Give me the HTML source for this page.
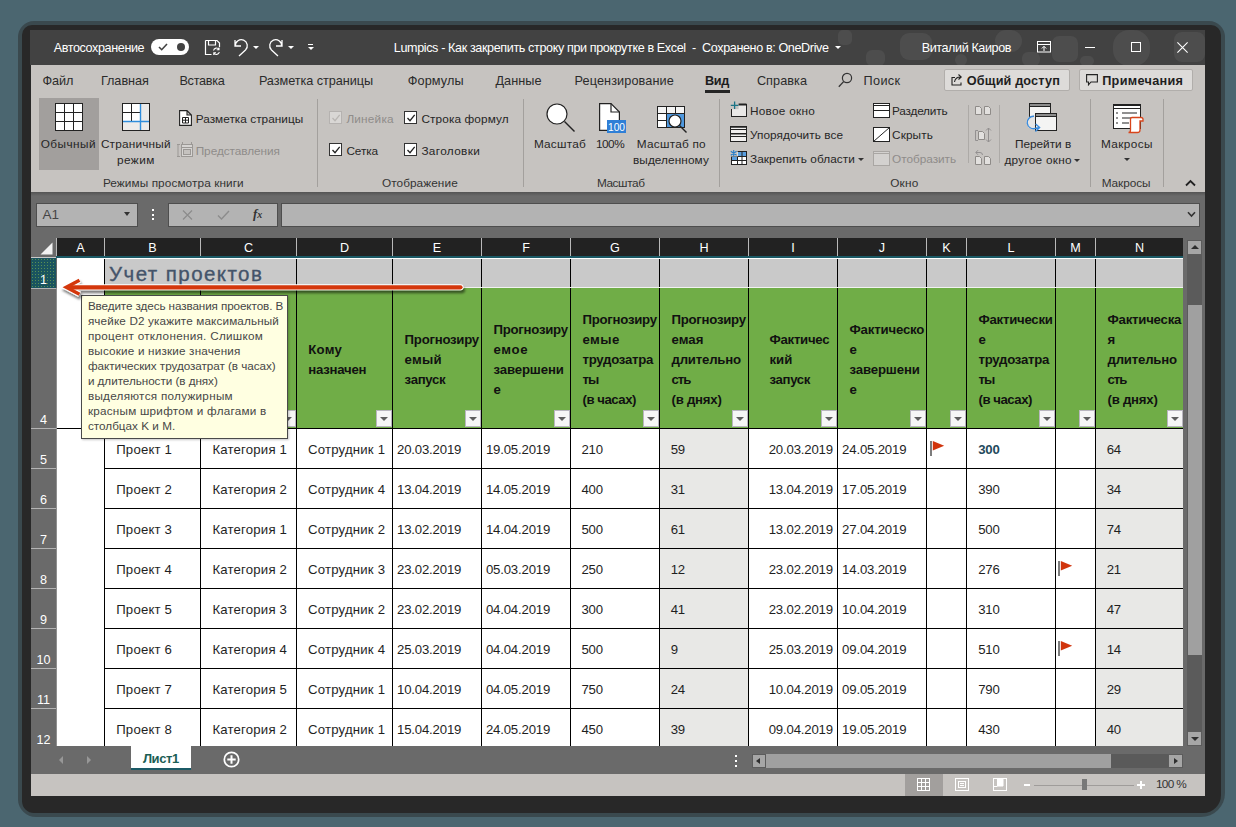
<!DOCTYPE html>
<html><head><meta charset="utf-8"><title>Excel</title>
<style>
html,body{margin:0;padding:0;}
body{width:1236px;height:827px;overflow:hidden;background:#4b6670;position:relative;font-family:"Liberation Sans",sans-serif;font-size:12px;color:#222;}
div,span,svg{position:absolute;box-sizing:border-box;}
.t{white-space:nowrap;}
.vl{width:1px;background:#000;}
.hl{height:1px;background:#000;}
.sep{width:1px;background:#a3a09d;top:99px;height:88px;}
.chk{width:12.6px;height:12.6px;border:1px solid #333;background:#fff;}
.fb{width:16.3px;height:16.5px;background:#f6f6f6;border:1px solid #b9b6bf;}
.fb:after{content:"";position:absolute;left:3.2px;top:5.8px;border-left:4.2px solid transparent;border-right:4.2px solid transparent;border-top:4.6px solid #5e5e5e;}
.da{border-left:3px solid transparent;border-right:3px solid transparent;border-top:3.5px solid #333;}
</style></head><body>

<div style="left:17.5px;top:21px;width:1207px;height:796px;background:rgba(38,38,38,.45);border-radius:16px 16px 24px 18px;"></div>
<div style="left:21.5px;top:25px;width:1199px;height:787.5px;background:#282828;border-radius:10px 10px 18px 12px;"></div>
<div style="left:31px;top:30px;width:1174px;height:766px;background:#6a6a6a;"></div>
<div style="left:30px;top:30px;width:1175px;height:34.5px;background:#424242;overflow:hidden;">
<div style="left:870px;top:3px;width:32px;height:27px;border-radius:9px;background:#4d4d4d;"></div>
<div style="left:808px;top:0px;width:14px;height:15px;border-radius:5px;background:#4d4d4d;"></div>
<div style="left:836px;top:20px;width:19px;height:16px;border-radius:6px;background:#4d4d4d;"></div>
<div style="left:965px;top:0px;width:27px;height:22px;border-radius:11px;background:#4d4d4d;"></div>
<div style="left:992px;top:22px;width:18px;height:14px;border-radius:6px;background:#4d4d4d;"></div>
<div style="left:1022px;top:6px;width:26px;height:26px;border-radius:7px;background:#4d4d4d;"></div>
<div style="left:1083px;top:0px;width:37px;height:36px;border-radius:16px;background:#4d4d4d;"></div>
<div style="left:1144px;top:2px;width:31px;height:30px;border-radius:8px;background:#4d4d4d;"></div>
<div style="left:925px;top:24px;width:12px;height:12px;border-radius:6px;background:#4d4d4d;"></div>
<div style="left:1050px;top:26px;width:14px;height:10px;border-radius:5px;background:#4d4d4d;"></div>
</div>
<div class="t" style="left:53.7px;top:39.5px;font-size:12.6px;line-height:16px;height:16px;color:#fff;letter-spacing:-0.39px;">Автосохранение</div>
<div style="left:151px;top:39px;width:38px;height:16px;border-radius:8px;background:#fff;"></div>
<div style="left:176.5px;top:43px;width:8px;height:8px;border-radius:4px;background:#424242;"></div>
<svg style="left:158px;top:43px" width="10" height="8" viewBox="0 0 10 8"><path d="M1 4 L3.7 6.7 L9 1" fill="none" stroke="#424242" stroke-width="1.6"/></svg>
<svg style="left:204px;top:39px" width="17" height="17" viewBox="0 0 17 17"><path d="M1.5 1.5 H13 L15.5 4 V8 M1.5 1.5 V15.5 H7.5 M4.5 1.5 V6 H11.5 V1.5" fill="none" stroke="#fff" stroke-width="1.2"/><path d="M9.5 11.5 A3 3 0 0 1 15 10.5 M15 8.5 V10.8 H12.7 M15.3 13 A3 3 0 0 1 9.8 14 M9.8 16 V13.7 H12" fill="none" stroke="#fff" stroke-width="1.1"/></svg>
<svg style="left:233px;top:38px" width="16" height="19" viewBox="0 0 16 19"><path d="M2 2 V8 H8 M2.3 7.7 A6 6 0 1 1 12.5 12 L6 18" fill="none" stroke="#fff" stroke-width="1.3"/></svg>
<div class="da" style="left:253px;top:46px;border-top-color:#fff;"></div>
<svg style="left:268px;top:38px" width="16" height="19" viewBox="0 0 16 19"><path d="M14 2 V8 H8 M13.7 7.7 A6 6 0 1 0 3.5 12 L10 18" fill="none" stroke="#fff" stroke-width="1.3"/></svg>
<div class="da" style="left:288px;top:46px;border-top-color:#fff;"></div>
<div style="left:308px;top:44px;width:5px;height:1.3px;background:#fff;"></div>
<div style="left:307.5px;top:47px;border-left:3px solid transparent;border-right:3px solid transparent;border-top:3.3px solid #fff;"></div>
<div class="t" style="left:393.8px;top:39.5px;font-size:12.6px;line-height:16px;height:16px;color:#fff;letter-spacing:-0.38px;">Lumpics - Как закрепить строку при прокрутке в Excel  -  Сохранено в: OneDrive</div>
<div class="da" style="left:835px;top:46px;border-top-color:#fff;"></div>
<div class="t" style="left:921.7px;top:39.5px;font-size:12.6px;line-height:16px;height:16px;color:#fff;letter-spacing:-0.41px;">Виталий Каиров</div>
<svg style="left:1037px;top:41px" width="14" height="12" viewBox="0 0 14 12"><rect x="0.5" y="0.5" width="13" height="10.5" fill="none" stroke="#fff"/><path d="M0.5 3.5 H13.5 M7 10 V5.5 M4.8 7.5 L7 5.3 L9.2 7.5" fill="none" stroke="#fff"/></svg>
<div style="left:1085px;top:47px;width:10px;height:1px;background:#fff;"></div>
<div style="left:1131px;top:42px;width:10px;height:10px;border:1px solid #fff;"></div>
<svg style="left:1176.5px;top:41.5px" width="11" height="11" viewBox="0 0 11 11"><path d="M0.4 0.4 L10.6 10.6 M10.6 0.4 L0.4 10.6" stroke="#fff" stroke-width="1.1"/></svg>
<div style="left:31px;top:64.5px;width:1174px;height:127.5px;background:#c6c3c0;"></div>
<div style="left:31px;top:192px;width:1174px;height:4px;background:linear-gradient(#545454,#6a6a6a);"></div>
<div class="t" style="left:42.4px;top:72.7px;font-size:12.7px;line-height:16px;height:16px;color:#2b2b2b;letter-spacing:-0.08px;">Файл</div>
<div class="t" style="left:100.9px;top:72.7px;font-size:12.7px;line-height:16px;height:16px;color:#2b2b2b;letter-spacing:-0.04px;">Главная</div>
<div class="t" style="left:179.4px;top:72.7px;font-size:12.7px;line-height:16px;height:16px;color:#2b2b2b;letter-spacing:-0.27px;">Вставка</div>
<div class="t" style="left:258.9px;top:72.7px;font-size:12.7px;line-height:16px;height:16px;color:#2b2b2b;letter-spacing:-0.06px;">Разметка страницы</div>
<div class="t" style="left:407.7px;top:72.7px;font-size:12.7px;line-height:16px;height:16px;color:#2b2b2b;letter-spacing:0.13px;">Формулы</div>
<div class="t" style="left:495.4px;top:72.7px;font-size:12.7px;line-height:16px;height:16px;color:#2b2b2b;letter-spacing:0.06px;">Данные</div>
<div class="t" style="left:574.6px;top:72.7px;font-size:12.7px;line-height:16px;height:16px;color:#2b2b2b;letter-spacing:0.09px;">Рецензирование</div>
<div class="t" style="left:756.9px;top:72.7px;font-size:12.7px;line-height:16px;height:16px;color:#2b2b2b;letter-spacing:0.05px;">Справка</div>
<div class="t" style="left:863.6px;top:72.7px;font-size:12.7px;line-height:16px;height:16px;color:#2b2b2b;letter-spacing:0.31px;">Поиск</div>
<div class="t" style="left:705.0px;top:72.7px;font-size:12.7px;line-height:16px;height:16px;color:#1d1d1d;letter-spacing:-0.34px;font-weight:bold;">Вид</div>
<div style="left:705px;top:90px;width:25px;height:3px;background:#252525;"></div>
<svg style="left:838px;top:72px" width="15" height="16" viewBox="0 0 15 16"><circle cx="9" cy="6" r="4.6" fill="none" stroke="#333" stroke-width="1.2"/><path d="M5.6 9.6 L0.8 14.8" stroke="#333" stroke-width="1.3"/></svg>
<div style="left:943.5px;top:69px;width:126px;height:22px;background:#dddbd9;border:1px solid #b1aeab;border-radius:2px;"></div>
<svg style="left:951px;top:73px" width="13" height="13" viewBox="0 0 13 13"><path d="M4 4.5 H1 V12 H10 V9.5" fill="none" stroke="#222" stroke-width="1.1"/><path d="M3.5 9 C4 6 6 4 9.5 4 M7.5 1.5 L10.2 4 L7.5 6.5" fill="none" stroke="#222" stroke-width="1.1"/></svg>
<div class="t" style="left:966.8px;top:72.6px;font-size:12.7px;line-height:16px;height:16px;color:#1f1f1f;letter-spacing:0.14px;font-weight:bold;">Общий доступ</div>
<div style="left:1079px;top:69px;width:113.5px;height:22px;background:#dddbd9;border:1px solid #b1aeab;border-radius:2px;"></div>
<svg style="left:1086px;top:74px" width="12" height="12" viewBox="0 0 12 12"><path d="M0.6 0.6 H11.4 V8 H5 L2.5 10.8 V8 H0.6 Z" fill="none" stroke="#222" stroke-width="1.1"/></svg>
<div class="t" style="left:1102.2px;top:72.6px;font-size:12.7px;line-height:16px;height:16px;color:#1f1f1f;letter-spacing:0.30px;font-weight:bold;">Примечания</div>
<div class="sep" style="left:317px;"></div>
<div class="sep" style="left:523px;"></div>
<div class="sep" style="left:719px;"></div>
<div class="sep" style="left:1090px;"></div>
<div class="sep" style="left:1163px;"></div>
<div class="sep" style="left:968px;top:105px;height:58px;background:#adaaa7;"></div>
<div class="sep" style="left:999px;top:105px;height:58px;background:#adaaa7;"></div>
<div class="t" style="left:102.9px;top:175.3px;font-size:11.8px;line-height:16px;height:16px;color:#333;letter-spacing:0.09px;">Режимы просмотра книги</div>
<div class="t" style="left:381.9px;top:175.3px;font-size:11.8px;line-height:16px;height:16px;color:#333;letter-spacing:0.08px;">Отображение</div>
<div class="t" style="left:596.9px;top:175.3px;font-size:11.8px;line-height:16px;height:16px;color:#333;letter-spacing:-0.40px;">Масштаб</div>
<div class="t" style="left:890.2px;top:175.3px;font-size:11.8px;line-height:16px;height:16px;color:#333;letter-spacing:0.22px;">Окно</div>
<div class="t" style="left:1101.7px;top:175.3px;font-size:11.8px;line-height:16px;height:16px;color:#333;letter-spacing:-0.06px;">Макросы</div>
<svg style="left:1185px;top:179px" width="11" height="8" viewBox="0 0 11 8"><path d="M1 6.5 L5.5 2 L10 6.5" fill="none" stroke="#222" stroke-width="1.8"/></svg>
<div style="left:39px;top:98px;width:60px;height:72px;background:#a29f9d;"></div>
<svg style="left:55px;top:103px" width="28" height="28" viewBox="0 0 28 28"><rect x="0.5" y="0.5" width="27" height="27" fill="#fff" stroke="#222"/><path d="M9.5 1 V27 M18.5 1 V27 M1 9.5 H27 M1 18.5 H27" stroke="#222"/></svg>
<div class="t" style="left:40.7px;top:136.0px;font-size:11.8px;line-height:16px;height:16px;color:#262626;letter-spacing:0.45px;">Обычный</div>
<svg style="left:122px;top:103px" width="28" height="28" viewBox="0 0 28 28"><rect x="0.5" y="0.5" width="27" height="27" fill="#ecebea" stroke="#222"/><rect x="1" y="1" width="17" height="17" fill="#fff"/><path d="M9.5 1 V18 M1 9.5 H18" stroke="#222"/><path d="M18.5 1 V27 M1 18.5 H27" stroke="#2f8ddc" stroke-width="1.4"/></svg>
<div class="t" style="left:100.9px;top:136.0px;font-size:11.8px;line-height:16px;height:16px;color:#262626;letter-spacing:0.20px;">Страничный</div>
<div class="t" style="left:116.9px;top:152.3px;font-size:11.8px;line-height:16px;height:16px;color:#262626;letter-spacing:0.46px;">режим</div>
<svg style="left:179px;top:110px" width="13" height="16" viewBox="0 0 13 16"><path d="M0.6 0.6 H8 L12.4 5 V15.4 H0.6 Z M8 0.6 V5 H12.4" fill="#fff" stroke="#222" stroke-width="1.1"/><path d="M3.5 7.5 H9.5 V13 H3.5 Z M6.5 7.5 V13 M3.5 10.2 H9.5" fill="none" stroke="#222"/></svg>
<div class="t" style="left:195.7px;top:111.3px;font-size:11.8px;line-height:16px;height:16px;color:#262626;letter-spacing:0.03px;">Разметка страницы</div>
<svg style="left:177px;top:142px" width="16" height="16" viewBox="0 0 16 16"><path d="M1 2 V15 M0 2.5 H3 M0 14.5 H3 M5.5 0 V2 M14.5 0 V2" stroke="#9b9895"/><rect x="4.5" y="2.5" width="11" height="12" fill="#d6d4d2" stroke="#9b9895"/><rect x="6.5" y="7.5" width="7" height="5" fill="#c5c2bf" stroke="#9b9895"/><path d="M5 5.5 H15" stroke="#9b9895"/></svg>
<div class="t" style="left:195.7px;top:143.2px;font-size:11.8px;line-height:16px;height:16px;color:#8f8c8a;letter-spacing:-0.05px;">Представления</div>
<div class="chk" style="left:329.2px;top:111.2px;border-color:#b5b2b0;background:#d9d7d5;"></div>
<svg style="left:329.5px;top:111.5px" width="12" height="12" viewBox="0 0 12 12"><path d="M2.5 6 L5 8.7 L9.7 2.8" fill="none" stroke="#b9b6b3" stroke-width="1.3"/></svg>
<div class="t" style="left:346.4px;top:111.3px;font-size:11.8px;line-height:16px;height:16px;color:#8f8c8a;letter-spacing:0.20px;">Линейка</div>
<div class="chk" style="left:329.2px;top:143.2px;"></div>
<svg style="left:329.5px;top:143.5px" width="12" height="12" viewBox="0 0 12 12"><path d="M2.5 6 L5 8.7 L9.7 2.8" fill="none" stroke="#222" stroke-width="1.3"/></svg>
<div class="t" style="left:346.4px;top:143.2px;font-size:11.8px;line-height:16px;height:16px;color:#262626;letter-spacing:-0.10px;">Сетка</div>
<div class="chk" style="left:404.2px;top:111.2px;"></div>
<svg style="left:404.5px;top:111.5px" width="12" height="12" viewBox="0 0 12 12"><path d="M2.5 6 L5 8.7 L9.7 2.8" fill="none" stroke="#222" stroke-width="1.3"/></svg>
<div class="t" style="left:421.4px;top:111.3px;font-size:11.8px;line-height:16px;height:16px;color:#262626;letter-spacing:0.12px;">Строка формул</div>
<div class="chk" style="left:404.2px;top:143.2px;"></div>
<svg style="left:404.5px;top:143.5px" width="12" height="12" viewBox="0 0 12 12"><path d="M2.5 6 L5 8.7 L9.7 2.8" fill="none" stroke="#222" stroke-width="1.3"/></svg>
<div class="t" style="left:421.4px;top:143.2px;font-size:11.8px;line-height:16px;height:16px;color:#262626;letter-spacing:0.34px;">Заголовки</div>
<svg style="left:546px;top:103px" width="30" height="30" viewBox="0 0 30 30"><circle cx="11" cy="11" r="10" fill="#fff" stroke="#222" stroke-width="1.2"/><path d="M18.5 18.5 L28.5 28.5" stroke="#222" stroke-width="1.4"/></svg>
<div class="t" style="left:533.9px;top:136.0px;font-size:11.8px;line-height:16px;height:16px;color:#262626;letter-spacing:0.23px;">Масштаб</div>
<svg style="left:599px;top:103px" width="27" height="31" viewBox="0 0 27 31"><path d="M0.6 0.6 H12 L20.4 9 V27.4 H0.6 Z" fill="#fff" stroke="#222" stroke-width="1.2"/><path d="M12 0.6 V9 H20.4" fill="none" stroke="#222" stroke-width="1.2"/><rect x="8" y="17" width="19" height="13" fill="#2f7fd6"/><text x="17.5" y="28" font-family="Liberation Sans" font-size="11" fill="#fff" text-anchor="middle" textLength="17" lengthAdjust="spacingAndGlyphs">100</text></svg>
<div class="t" style="left:595.9px;top:136.0px;font-size:11.8px;line-height:16px;height:16px;color:#262626;letter-spacing:-0.45px;">100%</div>
<svg style="left:657px;top:106px" width="31" height="28" viewBox="0 0 31 28"><rect x="0.5" y="0.5" width="27" height="21" fill="#fff" stroke="#222"/><rect x="1" y="1" width="26" height="6" fill="#f4f4f4"/><path d="M0.5 7.5 H27.5 M0.5 14.5 H27.5 M9.5 0.5 V21.5 M18.5 0.5 V21.5" stroke="#222"/><rect x="10" y="8" width="17" height="13" fill="#4f98de"/><circle cx="18" cy="15" r="6" fill="#fff" stroke="#222" stroke-width="1.2"/><path d="M22.5 19.5 L29.5 26.5" stroke="#222" stroke-width="1.4"/></svg>
<div class="t" style="left:636.8px;top:136.0px;font-size:11.8px;line-height:16px;height:16px;color:#262626;letter-spacing:0.24px;">Масштаб по</div>
<div class="t" style="left:633.0px;top:152.3px;font-size:11.8px;line-height:16px;height:16px;color:#262626;letter-spacing:0.08px;">выделенному</div>
<svg style="left:730px;top:101px" width="17" height="17" viewBox="0 0 17 17"><rect x="1.5" y="3.5" width="15" height="12" fill="#e9e8e7" stroke="#222"/><path d="M1.5 3.5 H16.5" stroke="#222" stroke-width="2"/><rect x="0" y="0" width="8.6" height="8.2" fill="#c6c3c0"/><path d="M1.5 8 V15.5" stroke="#222"/><path d="M4.6 0.6 V8 M0.8 4.3 H8.4" stroke="#1b7486" stroke-width="1.3"/></svg>
<div class="t" style="left:750.0px;top:103.2px;font-size:11.8px;line-height:16px;height:16px;color:#262626;letter-spacing:0.27px;">Новое окно</div>
<svg style="left:730px;top:126px" width="17" height="16" viewBox="0 0 17 16"><rect x="0.5" y="0.5" width="16" height="15" fill="#f1f0ef" stroke="#222"/><path d="M0.5 1 H16.5 M0.5 7.8 H16.5" stroke="#222" stroke-width="1.6"/><path d="M0.5 3.5 H16.5 M0.5 10.5 H16.5" stroke="#222"/></svg>
<div class="t" style="left:750.0px;top:127.2px;font-size:11.8px;line-height:16px;height:16px;color:#262626;letter-spacing:0.07px;">Упорядочить все</div>
<svg style="left:730px;top:150px" width="17" height="16" viewBox="0 0 17 16"><rect x="1.5" y="1.5" width="15" height="13" fill="#fff" stroke="#222"/><rect x="8" y="2" width="8" height="4" fill="#5a9fe0"/><rect x="2" y="7" width="5" height="4" fill="#5a9fe0"/><path d="M7.5 6.5 V14.5 M12 1.5 V14.5 M1.5 6.5 H16.5 M1.5 10.5 H16.5" stroke="#222"/><rect x="0" y="0" width="7.6" height="6.6" fill="#c6c3c0"/><path d="M3.7 0 V6.4 M0.8 1.2 L6.6 5.2 M6.6 1.2 L0.8 5.2" stroke="#2a7fc9" stroke-width="1.1"/></svg>
<div class="t" style="left:750.0px;top:151.2px;font-size:11.8px;line-height:16px;height:16px;color:#262626;letter-spacing:0.06px;">Закрепить области</div>
<div class="da" style="left:858px;top:158px;"></div>
<svg style="left:873px;top:103px" width="17" height="15" viewBox="0 0 17 15"><rect x="0.5" y="0.5" width="16" height="14" fill="#fff" stroke="#222"/><path d="M0.5 2.5 H16.5 M0.5 7.5 H16.5" stroke="#222"/></svg>
<div class="t" style="left:892.0px;top:103.2px;font-size:11.8px;line-height:16px;height:16px;color:#262626;letter-spacing:-0.20px;">Разделить</div>
<svg style="left:873px;top:127px" width="17" height="15" viewBox="0 0 17 15"><rect x="0.5" y="0.5" width="16" height="14" fill="#fff" stroke="#222"/><path d="M0.5 14.5 L16.5 0.5" stroke="#222"/></svg>
<div class="t" style="left:892.0px;top:127.2px;font-size:11.8px;line-height:16px;height:16px;color:#262626;letter-spacing:0.12px;">Скрыть</div>
<svg style="left:873px;top:151px" width="17" height="15" viewBox="0 0 17 15"><rect x="0.5" y="0.5" width="16" height="14" fill="#d3d1cf" stroke="#a9a6a3"/><path d="M0.5 2.5 H16.5" stroke="#a9a6a3"/></svg>
<div class="t" style="left:892.0px;top:151.2px;font-size:11.8px;line-height:16px;height:16px;color:#8f8c8a;letter-spacing:-0.02px;">Отобразить</div>
<svg style="left:975px;top:105px" width="17" height="12" viewBox="0 0 17 12"><path d="M0.5 1.5 h4 l2 2 v6 h-6 z" fill="#e2e0de" stroke="#8e8b88" stroke-width="1"/><path d="M9.5 1.5 h4 l2 2 v6 h-6 z" fill="#e2e0de" stroke="#8e8b88" stroke-width="1"/></svg>
<svg style="left:975px;top:126px" width="17" height="18" viewBox="0 0 17 18"><path d="M3 4.5 H0.5 V14.5 H3" fill="none" stroke="#939090"/><path d="M3.5 5.5 h4 l2 2 v6 h-6 z" fill="#e2e0de" stroke="#8e8b88" stroke-width="1"/><path d="M13.5 2 V16 M11 4.5 L13.5 2 L16 4.5 M11 13.5 L13.5 16 L16 13.5" fill="none" stroke="#939090"/></svg>
<svg style="left:975px;top:149px" width="17" height="17" viewBox="0 0 17 17"><path d="M1 3.5 H5 Q7.5 3.5 7.5 6 M3 1.2 L0.8 3.5 L3 5.8" fill="none" stroke="#939090"/><path d="M0.5 7.5 h4 l2 2 v6 h-6 z" fill="#e2e0de" stroke="#8e8b88" stroke-width="1"/><path d="M9.5 7.5 h4 l2 2 v6 h-6 z" fill="#e2e0de" stroke="#8e8b88" stroke-width="1"/></svg>
<svg style="left:1026px;top:103px" width="32" height="31" viewBox="0 0 32 31"><rect x="3.5" y="0.5" width="21" height="17" fill="#f4f4f3" stroke="#222"/><rect x="3.5" y="0.5" width="21" height="3" fill="#8c8c8c" stroke="#222"/><circle cx="7.5" cy="19.5" r="7" fill="#e6e5e4"/><rect x="9.5" y="10.5" width="21" height="17" fill="#f4f4f3" stroke="#222"/><rect x="9.5" y="10.5" width="21" height="3" fill="#8c8c8c" stroke="#222"/><path d="M8 13.3 A6.2 6.2 0 1 0 9.5 25.3 L13 24.7 M9.6 21 L13.6 24.6 L9.4 28.6" fill="none" stroke="#3a8bdc" stroke-width="1.4"/></svg>
<div class="t" style="left:1014.9px;top:136.0px;font-size:11.8px;line-height:16px;height:16px;color:#262626;letter-spacing:0.01px;">Перейти в</div>
<div class="t" style="left:1004.4px;top:152.3px;font-size:11.8px;line-height:16px;height:16px;color:#262626;letter-spacing:0.27px;">другое окно</div>
<div class="da" style="left:1074px;top:159px;"></div>
<svg style="left:1113px;top:104px" width="31" height="30" viewBox="0 0 31 30"><rect x="0.5" y="0.5" width="27" height="24" fill="#fff" stroke="#222"/><path d="M0.5 1 H27.5" stroke="#222" stroke-width="2"/><path d="M0.5 4.5 H27.5" stroke="#222"/><path d="M3 9 h3 M3 14 h3 M3 19 h3" stroke="#222" stroke-dasharray="2 1"/><path d="M9 9 H24 M9 14 H18 M9 19 H16" stroke="#222" stroke-width="1.2"/><path d="M19 13.5 H28 Q30 13.5 30 15.5 V17 H27 V26 Q27 28.5 24.5 28.5 H15.5 Q17.5 28.5 17.5 26 V15 Q17.5 13.5 19 13.5 Z" fill="#fff" stroke="#d8451b" stroke-width="1.3"/></svg>
<div class="t" style="left:1101.0px;top:136.0px;font-size:11.8px;line-height:16px;height:16px;color:#262626;letter-spacing:0.37px;">Макросы</div>
<div class="da" style="left:1124px;top:158px;"></div>
<div style="left:36px;top:202.5px;width:102px;height:24.7px;background:#b3b3b3;border:1px solid #4e4e4e;"></div>
<div class="t" style="left:42.4px;top:207.0px;font-size:13.5px;line-height:16px;height:16px;color:#454545;letter-spacing:0.09px;">A1</div>
<div style="left:124px;top:212px;border-left:3.5px solid transparent;border-right:3.5px solid transparent;border-top:4px solid #333;"></div>
<div style="left:152px;top:209.0px;width:2px;height:2px;background:#fff;"></div>
<div style="left:152px;top:213.5px;width:2px;height:2px;background:#fff;"></div>
<div style="left:152px;top:218.0px;width:2px;height:2px;background:#fff;"></div>
<div style="left:168px;top:202.5px;width:110px;height:24.7px;background:#b3b3b3;border:1px solid #4e4e4e;"></div>
<svg style="left:182px;top:210px" width="11" height="10" viewBox="0 0 11 10"><path d="M1 0.5 L10 9.5 M10 0.5 L1 9.5" stroke="#8c8c8c" stroke-width="1.2"/></svg>
<svg style="left:217px;top:210px" width="13" height="10" viewBox="0 0 13 10"><path d="M1 5.5 L4.5 9 L12 1" fill="none" stroke="#8c8c8c" stroke-width="1.4"/></svg>
<div class="t" style="left:253px;top:206px;line-height:16px;font-family:'Liberation Serif',serif;font-style:italic;font-weight:bold;font-size:13px;color:#333;">f<span style="position:static;font-size:10px;">x</span></div>
<div style="left:281px;top:202.5px;width:919px;height:24.7px;background:#b3b3b3;border:1px solid #4e4e4e;"></div>
<svg style="left:1187px;top:211px" width="9" height="7" viewBox="0 0 9 7"><path d="M1 1.2 L4.5 5 L8 1.2" fill="none" stroke="#333" stroke-width="1.6"/></svg>
<div style="left:57px;top:238px;width:1126px;height:18px;background:#222222;"></div>
<svg style="left:40px;top:241.5px" width="13" height="13" viewBox="0 0 13 13"><path d="M12.5 0.5 V12.5 H0.5 Z" fill="#f2f2f2"/></svg>
<div class="t" style="left:57px;top:238px;width:47px;height:18px;line-height:21px;color:#fff;font-size:12.6px;text-align:center;">A</div>
<div style="left:56px;top:238px;width:1px;height:18px;background:#b9b9b9;"></div>
<div class="t" style="left:105px;top:238px;width:95px;height:18px;line-height:21px;color:#fff;font-size:12.6px;text-align:center;">B</div>
<div style="left:104px;top:238px;width:1px;height:18px;background:#b9b9b9;"></div>
<div class="t" style="left:201px;top:238px;width:95px;height:18px;line-height:21px;color:#fff;font-size:12.6px;text-align:center;">C</div>
<div style="left:200px;top:238px;width:1px;height:18px;background:#b9b9b9;"></div>
<div class="t" style="left:297px;top:238px;width:95px;height:18px;line-height:21px;color:#fff;font-size:12.6px;text-align:center;">D</div>
<div style="left:296px;top:238px;width:1px;height:18px;background:#b9b9b9;"></div>
<div class="t" style="left:393px;top:238px;width:88px;height:18px;line-height:21px;color:#fff;font-size:12.6px;text-align:center;">E</div>
<div style="left:392px;top:238px;width:1px;height:18px;background:#b9b9b9;"></div>
<div class="t" style="left:482px;top:238px;width:88px;height:18px;line-height:21px;color:#fff;font-size:12.6px;text-align:center;">F</div>
<div style="left:481px;top:238px;width:1px;height:18px;background:#b9b9b9;"></div>
<div class="t" style="left:571px;top:238px;width:88px;height:18px;line-height:21px;color:#fff;font-size:12.6px;text-align:center;">G</div>
<div style="left:570px;top:238px;width:1px;height:18px;background:#b9b9b9;"></div>
<div class="t" style="left:660px;top:238px;width:88px;height:18px;line-height:21px;color:#fff;font-size:12.6px;text-align:center;">H</div>
<div style="left:659px;top:238px;width:1px;height:18px;background:#b9b9b9;"></div>
<div class="t" style="left:749px;top:238px;width:88px;height:18px;line-height:21px;color:#fff;font-size:12.6px;text-align:center;">I</div>
<div style="left:748px;top:238px;width:1px;height:18px;background:#b9b9b9;"></div>
<div class="t" style="left:838px;top:238px;width:88px;height:18px;line-height:21px;color:#fff;font-size:12.6px;text-align:center;">J</div>
<div style="left:837px;top:238px;width:1px;height:18px;background:#b9b9b9;"></div>
<div class="t" style="left:927px;top:238px;width:39px;height:18px;line-height:21px;color:#fff;font-size:12.6px;text-align:center;">K</div>
<div style="left:926px;top:238px;width:1px;height:18px;background:#b9b9b9;"></div>
<div class="t" style="left:967px;top:238px;width:88px;height:18px;line-height:21px;color:#fff;font-size:12.6px;text-align:center;">L</div>
<div style="left:966px;top:238px;width:1px;height:18px;background:#b9b9b9;"></div>
<div class="t" style="left:1056px;top:238px;width:39px;height:18px;line-height:21px;color:#fff;font-size:12.6px;text-align:center;">M</div>
<div style="left:1055px;top:238px;width:1px;height:18px;background:#b9b9b9;"></div>
<div class="t" style="left:1096px;top:238px;width:87px;height:18px;line-height:21px;color:#fff;font-size:12.6px;text-align:center;">N</div>
<div style="left:1095px;top:238px;width:1px;height:18px;background:#b9b9b9;"></div>
<div style="left:31px;top:257px;width:25px;height:1px;background:#c9c9c9;"></div>
<div style="left:56px;top:288px;width:1px;height:458px;background:#8f8f8f;"></div>
<div style="left:56px;top:256px;width:1127px;height:2px;background:#1b5a66;"></div>
<div style="left:57px;top:258px;width:1126px;height:488px;background:#fff;"></div>
<div style="left:105px;top:259px;width:1078px;height:28px;background:#c9c9c9;"></div>
<div style="left:105px;top:288px;width:1078px;height:140px;background:#70ad47;"></div>
<div style="left:660px;top:429px;width:88px;height:317px;background:#e8e8e6;"></div>
<div style="left:1096px;top:429px;width:87px;height:317px;background:#e8e8e6;"></div>
<div style="left:31px;top:258px;width:25px;height:30px;background:#1b5560;background-image:radial-gradient(circle,#8cc04a 0.6px,transparent 1px);background-size:3px 3px;"></div>
<div style="left:31px;top:258px;width:25px;height:30px;background:rgba(27,85,96,.45);"></div>
<div style="left:31px;top:287.6px;width:25px;height:1.4px;background:#b3b3b3;"></div>
<div class="t" style="left:31px;width:25px;top:273.4px;color:#fff;font-size:12.6px;text-align:center;line-height:14px;height:14px;">1</div>
<div style="left:31px;top:427.6px;width:25px;height:1.4px;background:#b3b3b3;"></div>
<div class="t" style="left:31px;width:25px;top:413.4px;color:#fff;font-size:12.6px;text-align:center;line-height:14px;height:14px;">4</div>
<div style="left:31px;top:467.6px;width:25px;height:1.4px;background:#b3b3b3;"></div>
<div class="t" style="left:31px;width:25px;top:453.4px;color:#fff;font-size:12.6px;text-align:center;line-height:14px;height:14px;">5</div>
<div style="left:31px;top:507.6px;width:25px;height:1.4px;background:#b3b3b3;"></div>
<div class="t" style="left:31px;width:25px;top:493.4px;color:#fff;font-size:12.6px;text-align:center;line-height:14px;height:14px;">6</div>
<div style="left:31px;top:547.6px;width:25px;height:1.4px;background:#b3b3b3;"></div>
<div class="t" style="left:31px;width:25px;top:533.4px;color:#fff;font-size:12.6px;text-align:center;line-height:14px;height:14px;">7</div>
<div style="left:31px;top:587.6px;width:25px;height:1.4px;background:#b3b3b3;"></div>
<div class="t" style="left:31px;width:25px;top:573.4px;color:#fff;font-size:12.6px;text-align:center;line-height:14px;height:14px;">8</div>
<div style="left:31px;top:627.6px;width:25px;height:1.4px;background:#b3b3b3;"></div>
<div class="t" style="left:31px;width:25px;top:613.4px;color:#fff;font-size:12.6px;text-align:center;line-height:14px;height:14px;">9</div>
<div style="left:31px;top:667.6px;width:25px;height:1.4px;background:#b3b3b3;"></div>
<div class="t" style="left:31px;width:25px;top:653.4px;color:#fff;font-size:12.6px;text-align:center;line-height:14px;height:14px;">10</div>
<div style="left:31px;top:707.6px;width:25px;height:1.4px;background:#b3b3b3;"></div>
<div class="t" style="left:31px;width:25px;top:693.4px;color:#fff;font-size:12.6px;text-align:center;line-height:14px;height:14px;">11</div>
<div class="t" style="left:31px;width:25px;top:732.5px;color:#fff;font-size:12.6px;text-align:center;line-height:14px;height:14px;">12</div>
<div class="vl" style="left:104px;top:259px;height:28px;"></div>
<div class="vl" style="left:104px;top:288px;height:458px;"></div>
<div class="vl" style="left:200px;top:288px;height:458px;"></div>
<div class="vl" style="left:296px;top:259px;height:28px;"></div>
<div class="vl" style="left:296px;top:288px;height:458px;"></div>
<div class="vl" style="left:392px;top:259px;height:28px;"></div>
<div class="vl" style="left:392px;top:288px;height:458px;"></div>
<div class="vl" style="left:481px;top:259px;height:28px;"></div>
<div class="vl" style="left:481px;top:288px;height:458px;"></div>
<div class="vl" style="left:570px;top:259px;height:28px;"></div>
<div class="vl" style="left:570px;top:288px;height:458px;"></div>
<div class="vl" style="left:659px;top:259px;height:28px;"></div>
<div class="vl" style="left:659px;top:288px;height:458px;"></div>
<div class="vl" style="left:748px;top:259px;height:28px;"></div>
<div class="vl" style="left:748px;top:288px;height:458px;"></div>
<div class="vl" style="left:837px;top:259px;height:28px;"></div>
<div class="vl" style="left:837px;top:288px;height:458px;"></div>
<div class="vl" style="left:926px;top:259px;height:28px;"></div>
<div class="vl" style="left:926px;top:288px;height:458px;"></div>
<div class="vl" style="left:966px;top:259px;height:28px;"></div>
<div class="vl" style="left:966px;top:288px;height:458px;"></div>
<div class="vl" style="left:1055px;top:259px;height:28px;"></div>
<div class="vl" style="left:1055px;top:288px;height:458px;"></div>
<div class="vl" style="left:1095px;top:259px;height:28px;"></div>
<div class="vl" style="left:1095px;top:288px;height:458px;"></div>
<div class="hl" style="left:57px;top:428px;width:1126px;"></div>
<div class="hl" style="left:105px;top:468px;width:1078px;"></div>
<div class="hl" style="left:105px;top:508px;width:1078px;"></div>
<div class="hl" style="left:105px;top:548px;width:1078px;"></div>
<div class="hl" style="left:105px;top:588px;width:1078px;"></div>
<div class="hl" style="left:105px;top:628px;width:1078px;"></div>
<div class="hl" style="left:105px;top:668px;width:1078px;"></div>
<div class="hl" style="left:105px;top:708px;width:1078px;"></div>
<div style="left:105px;top:287px;width:1078px;height:1px;background:#f1f1f1;"></div>
<div class="t" style="left:109.1px;top:261.8px;font-size:20.5px;line-height:24px;height:24px;color:#44546a;letter-spacing:1.44px;-webkit-text-stroke:0.35px #44546a;">Учет проектов</div>
<div class="t" style="left:308.2px;top:340.0px;font-size:13.2px;line-height:20px;height:20px;color:#111;letter-spacing:0.26px;font-weight:bold;">Кому</div>
<div class="t" style="left:308.2px;top:360.0px;font-size:13.2px;line-height:20px;height:20px;color:#111;letter-spacing:-0.23px;font-weight:bold;">назначен</div>
<div class="t" style="left:404.6px;top:330.0px;font-size:13.2px;line-height:20px;height:20px;color:#111;letter-spacing:-0.25px;font-weight:bold;">Прогнозиру</div>
<div class="t" style="left:404.6px;top:350.0px;font-size:13.2px;line-height:20px;height:20px;color:#111;letter-spacing:0.25px;font-weight:bold;">емый</div>
<div class="t" style="left:404.6px;top:370.0px;font-size:13.2px;line-height:20px;height:20px;color:#111;letter-spacing:-0.34px;font-weight:bold;">запуск</div>
<div class="t" style="left:493.5px;top:320.0px;font-size:13.2px;line-height:20px;height:20px;color:#111;letter-spacing:-0.25px;font-weight:bold;">Прогнозиру</div>
<div class="t" style="left:493.5px;top:340.0px;font-size:13.2px;line-height:20px;height:20px;color:#111;letter-spacing:0.69px;font-weight:bold;">емое</div>
<div class="t" style="left:493.5px;top:360.0px;font-size:13.2px;line-height:20px;height:20px;color:#111;letter-spacing:-0.14px;font-weight:bold;">завершени</div>
<div class="t" style="left:493.5px;top:380.0px;font-size:13.2px;line-height:20px;height:20px;color:#111;letter-spacing:-0.22px;font-weight:bold;">е</div>
<div class="t" style="left:582.5px;top:310.0px;font-size:13.2px;line-height:20px;height:20px;color:#111;letter-spacing:-0.25px;font-weight:bold;">Прогнозиру</div>
<div class="t" style="left:582.5px;top:330.0px;font-size:13.2px;line-height:20px;height:20px;color:#111;letter-spacing:0.45px;font-weight:bold;">емые</div>
<div class="t" style="left:582.5px;top:350.0px;font-size:13.2px;line-height:20px;height:20px;color:#111;letter-spacing:-0.26px;font-weight:bold;">трудозатра</div>
<div class="t" style="left:582.5px;top:370.0px;font-size:13.2px;line-height:20px;height:20px;color:#111;letter-spacing:-1.02px;font-weight:bold;">ты</div>
<div class="t" style="left:582.5px;top:390.0px;font-size:13.2px;line-height:20px;height:20px;color:#111;letter-spacing:-0.47px;font-weight:bold;">(в часах)</div>
<div class="t" style="left:671.5px;top:310.0px;font-size:13.2px;line-height:20px;height:20px;color:#111;letter-spacing:-0.25px;font-weight:bold;">Прогнозиру</div>
<div class="t" style="left:671.5px;top:330.0px;font-size:13.2px;line-height:20px;height:20px;color:#111;letter-spacing:0.03px;font-weight:bold;">емая</div>
<div class="t" style="left:671.5px;top:350.0px;font-size:13.2px;line-height:20px;height:20px;color:#111;letter-spacing:-0.20px;font-weight:bold;">длительно</div>
<div class="t" style="left:671.5px;top:370.0px;font-size:13.2px;line-height:20px;height:20px;color:#111;letter-spacing:-1.07px;font-weight:bold;">сть</div>
<div class="t" style="left:671.5px;top:390.0px;font-size:13.2px;line-height:20px;height:20px;color:#111;letter-spacing:-0.23px;font-weight:bold;">(в днях)</div>
<div class="t" style="left:769.5px;top:330.0px;font-size:13.2px;line-height:20px;height:20px;color:#111;letter-spacing:-0.27px;font-weight:bold;">Фактичес</div>
<div class="t" style="left:769.5px;top:350.0px;font-size:13.2px;line-height:20px;height:20px;color:#111;letter-spacing:-0.04px;font-weight:bold;">кий</div>
<div class="t" style="left:769.5px;top:370.0px;font-size:13.2px;line-height:20px;height:20px;color:#111;letter-spacing:-0.34px;font-weight:bold;">запуск</div>
<div class="t" style="left:849.5px;top:320.0px;font-size:13.2px;line-height:20px;height:20px;color:#111;letter-spacing:-0.17px;font-weight:bold;">Фактическо</div>
<div class="t" style="left:849.5px;top:340.0px;font-size:13.2px;line-height:20px;height:20px;color:#111;letter-spacing:-0.22px;font-weight:bold;">е</div>
<div class="t" style="left:849.5px;top:360.0px;font-size:13.2px;line-height:20px;height:20px;color:#111;letter-spacing:-0.14px;font-weight:bold;">завершени</div>
<div class="t" style="left:849.5px;top:380.0px;font-size:13.2px;line-height:20px;height:20px;color:#111;letter-spacing:-0.22px;font-weight:bold;">е</div>
<div class="t" style="left:978.5px;top:310.0px;font-size:13.2px;line-height:20px;height:20px;color:#111;letter-spacing:-0.25px;font-weight:bold;">Фактически</div>
<div class="t" style="left:978.5px;top:330.0px;font-size:13.2px;line-height:20px;height:20px;color:#111;letter-spacing:-0.22px;font-weight:bold;">е</div>
<div class="t" style="left:978.5px;top:350.0px;font-size:13.2px;line-height:20px;height:20px;color:#111;letter-spacing:-0.26px;font-weight:bold;">трудозатра</div>
<div class="t" style="left:978.5px;top:370.0px;font-size:13.2px;line-height:20px;height:20px;color:#111;letter-spacing:-1.02px;font-weight:bold;">ты</div>
<div class="t" style="left:978.5px;top:390.0px;font-size:13.2px;line-height:20px;height:20px;color:#111;letter-spacing:-0.47px;font-weight:bold;">(в часах)</div>
<div class="t" style="left:1107.5px;top:310.0px;font-size:13.2px;line-height:20px;height:20px;color:#111;letter-spacing:-0.22px;font-weight:bold;">Фактическа</div>
<div class="t" style="left:1107.5px;top:330.0px;font-size:13.2px;line-height:20px;height:20px;color:#111;letter-spacing:-0.22px;font-weight:bold;">я</div>
<div class="t" style="left:1107.5px;top:350.0px;font-size:13.2px;line-height:20px;height:20px;color:#111;letter-spacing:-0.20px;font-weight:bold;">длительно</div>
<div class="t" style="left:1107.5px;top:370.0px;font-size:13.2px;line-height:20px;height:20px;color:#111;letter-spacing:-1.07px;font-weight:bold;">сть</div>
<div class="t" style="left:1107.5px;top:390.0px;font-size:13.2px;line-height:20px;height:20px;color:#111;letter-spacing:-0.23px;font-weight:bold;">(в днях)</div>
<div class="fb" style="left:183.9px;top:410.2px;"></div>
<div class="fb" style="left:279.9px;top:410.2px;"></div>
<div class="fb" style="left:375.9px;top:410.2px;"></div>
<div class="fb" style="left:464.9px;top:410.2px;"></div>
<div class="fb" style="left:553.9px;top:410.2px;"></div>
<div class="fb" style="left:642.9px;top:410.2px;"></div>
<div class="fb" style="left:731.9px;top:410.2px;"></div>
<div class="fb" style="left:820.9px;top:410.2px;"></div>
<div class="fb" style="left:909.9px;top:410.2px;"></div>
<div class="fb" style="left:949.9px;top:410.2px;"></div>
<div class="fb" style="left:1038.9px;top:410.2px;"></div>
<div class="fb" style="left:1078.9px;top:410.2px;"></div>
<div class="fb" style="left:1166.9px;top:410.2px;"></div>
<div class="t" style="left:116.2px;top:441.8px;font-size:13.2px;line-height:16px;height:16px;color:#1f1f1f;letter-spacing:0.19px;">Проект 1</div>
<div class="t" style="left:212.4px;top:441.8px;font-size:13.2px;line-height:16px;height:16px;color:#1f1f1f;letter-spacing:0.19px;">Категория 1</div>
<div class="t" style="left:308.0px;top:441.8px;font-size:13.2px;line-height:16px;height:16px;color:#1f1f1f;letter-spacing:0.19px;">Сотрудник 1</div>
<div class="t" style="left:397.0px;top:441.8px;font-size:13.2px;line-height:16px;height:16px;color:#1f1f1f;letter-spacing:-0.18px;">20.03.2019</div>
<div class="t" style="left:485.9px;top:441.8px;font-size:13.2px;line-height:16px;height:16px;color:#1f1f1f;letter-spacing:-0.18px;">19.05.2019</div>
<div class="t" style="left:581.4px;top:441.8px;font-size:13.2px;line-height:16px;height:16px;color:#1f1f1f;letter-spacing:-0.18px;">210</div>
<div class="t" style="left:670.7px;top:441.8px;font-size:13.2px;line-height:16px;height:16px;color:#1f1f1f;letter-spacing:-0.18px;">59</div>
<div class="t" style="left:768.7px;top:441.8px;font-size:13.2px;line-height:16px;height:16px;color:#1f1f1f;letter-spacing:-0.18px;">20.03.2019</div>
<div class="t" style="left:842.1px;top:441.8px;font-size:13.2px;line-height:16px;height:16px;color:#1f1f1f;letter-spacing:-0.18px;">24.05.2019</div>
<svg style="left:930px;top:441px" width="16" height="16" viewBox="0 0 16 16"><path d="M1 0 V15" stroke="#6e6e6e" stroke-width="1.8"/><path d="M2.8 0 L14.2 4.8 L2.8 9.4 Z" fill="#d1340c"/></svg>
<div class="t" style="left:978.2px;top:441.8px;font-size:13.2px;line-height:16px;height:16px;color:#1f4a5c;letter-spacing:-0.18px;font-weight:bold;">300</div>
<div class="t" style="left:1106.7px;top:441.8px;font-size:13.2px;line-height:16px;height:16px;color:#1f1f1f;letter-spacing:-0.18px;">64</div>
<div class="t" style="left:116.2px;top:481.8px;font-size:13.2px;line-height:16px;height:16px;color:#1f1f1f;letter-spacing:0.19px;">Проект 2</div>
<div class="t" style="left:212.4px;top:481.8px;font-size:13.2px;line-height:16px;height:16px;color:#1f1f1f;letter-spacing:0.19px;">Категория 2</div>
<div class="t" style="left:308.0px;top:481.8px;font-size:13.2px;line-height:16px;height:16px;color:#1f1f1f;letter-spacing:0.19px;">Сотрудник 4</div>
<div class="t" style="left:397.0px;top:481.8px;font-size:13.2px;line-height:16px;height:16px;color:#1f1f1f;letter-spacing:-0.18px;">13.04.2019</div>
<div class="t" style="left:485.9px;top:481.8px;font-size:13.2px;line-height:16px;height:16px;color:#1f1f1f;letter-spacing:-0.18px;">14.05.2019</div>
<div class="t" style="left:581.4px;top:481.8px;font-size:13.2px;line-height:16px;height:16px;color:#1f1f1f;letter-spacing:-0.18px;">400</div>
<div class="t" style="left:670.7px;top:481.8px;font-size:13.2px;line-height:16px;height:16px;color:#1f1f1f;letter-spacing:-0.18px;">31</div>
<div class="t" style="left:768.7px;top:481.8px;font-size:13.2px;line-height:16px;height:16px;color:#1f1f1f;letter-spacing:-0.18px;">13.04.2019</div>
<div class="t" style="left:842.1px;top:481.8px;font-size:13.2px;line-height:16px;height:16px;color:#1f1f1f;letter-spacing:-0.18px;">17.05.2019</div>
<div class="t" style="left:978.2px;top:481.8px;font-size:13.2px;line-height:16px;height:16px;color:#1f1f1f;letter-spacing:-0.18px;">390</div>
<div class="t" style="left:1106.7px;top:481.8px;font-size:13.2px;line-height:16px;height:16px;color:#1f1f1f;letter-spacing:-0.18px;">34</div>
<div class="t" style="left:116.2px;top:521.8px;font-size:13.2px;line-height:16px;height:16px;color:#1f1f1f;letter-spacing:0.19px;">Проект 3</div>
<div class="t" style="left:212.4px;top:521.8px;font-size:13.2px;line-height:16px;height:16px;color:#1f1f1f;letter-spacing:0.19px;">Категория 1</div>
<div class="t" style="left:308.0px;top:521.8px;font-size:13.2px;line-height:16px;height:16px;color:#1f1f1f;letter-spacing:0.19px;">Сотрудник 2</div>
<div class="t" style="left:397.0px;top:521.8px;font-size:13.2px;line-height:16px;height:16px;color:#1f1f1f;letter-spacing:-0.18px;">13.02.2019</div>
<div class="t" style="left:485.9px;top:521.8px;font-size:13.2px;line-height:16px;height:16px;color:#1f1f1f;letter-spacing:-0.18px;">14.04.2019</div>
<div class="t" style="left:581.4px;top:521.8px;font-size:13.2px;line-height:16px;height:16px;color:#1f1f1f;letter-spacing:-0.18px;">500</div>
<div class="t" style="left:670.7px;top:521.8px;font-size:13.2px;line-height:16px;height:16px;color:#1f1f1f;letter-spacing:-0.18px;">61</div>
<div class="t" style="left:768.7px;top:521.8px;font-size:13.2px;line-height:16px;height:16px;color:#1f1f1f;letter-spacing:-0.18px;">13.02.2019</div>
<div class="t" style="left:842.1px;top:521.8px;font-size:13.2px;line-height:16px;height:16px;color:#1f1f1f;letter-spacing:-0.18px;">27.04.2019</div>
<div class="t" style="left:978.2px;top:521.8px;font-size:13.2px;line-height:16px;height:16px;color:#1f1f1f;letter-spacing:-0.18px;">500</div>
<div class="t" style="left:1106.7px;top:521.8px;font-size:13.2px;line-height:16px;height:16px;color:#1f1f1f;letter-spacing:-0.18px;">74</div>
<div class="t" style="left:116.2px;top:561.8px;font-size:13.2px;line-height:16px;height:16px;color:#1f1f1f;letter-spacing:0.19px;">Проект 4</div>
<div class="t" style="left:212.4px;top:561.8px;font-size:13.2px;line-height:16px;height:16px;color:#1f1f1f;letter-spacing:0.19px;">Категория 2</div>
<div class="t" style="left:308.0px;top:561.8px;font-size:13.2px;line-height:16px;height:16px;color:#1f1f1f;letter-spacing:0.19px;">Сотрудник 3</div>
<div class="t" style="left:397.0px;top:561.8px;font-size:13.2px;line-height:16px;height:16px;color:#1f1f1f;letter-spacing:-0.18px;">23.02.2019</div>
<div class="t" style="left:485.9px;top:561.8px;font-size:13.2px;line-height:16px;height:16px;color:#1f1f1f;letter-spacing:-0.18px;">05.03.2019</div>
<div class="t" style="left:581.4px;top:561.8px;font-size:13.2px;line-height:16px;height:16px;color:#1f1f1f;letter-spacing:-0.18px;">250</div>
<div class="t" style="left:670.7px;top:561.8px;font-size:13.2px;line-height:16px;height:16px;color:#1f1f1f;letter-spacing:-0.18px;">12</div>
<div class="t" style="left:768.7px;top:561.8px;font-size:13.2px;line-height:16px;height:16px;color:#1f1f1f;letter-spacing:-0.18px;">23.02.2019</div>
<div class="t" style="left:842.1px;top:561.8px;font-size:13.2px;line-height:16px;height:16px;color:#1f1f1f;letter-spacing:-0.18px;">14.03.2019</div>
<div class="t" style="left:978.2px;top:561.8px;font-size:13.2px;line-height:16px;height:16px;color:#1f1f1f;letter-spacing:-0.18px;">276</div>
<svg style="left:1058px;top:561px" width="16" height="16" viewBox="0 0 16 16"><path d="M1 0 V15" stroke="#6e6e6e" stroke-width="1.8"/><path d="M2.8 0 L14.2 4.8 L2.8 9.4 Z" fill="#d1340c"/></svg>
<div class="t" style="left:1106.7px;top:561.8px;font-size:13.2px;line-height:16px;height:16px;color:#1f1f1f;letter-spacing:-0.18px;">21</div>
<div class="t" style="left:116.2px;top:601.8px;font-size:13.2px;line-height:16px;height:16px;color:#1f1f1f;letter-spacing:0.19px;">Проект 5</div>
<div class="t" style="left:212.4px;top:601.8px;font-size:13.2px;line-height:16px;height:16px;color:#1f1f1f;letter-spacing:0.19px;">Категория 3</div>
<div class="t" style="left:308.0px;top:601.8px;font-size:13.2px;line-height:16px;height:16px;color:#1f1f1f;letter-spacing:0.19px;">Сотрудник 2</div>
<div class="t" style="left:397.0px;top:601.8px;font-size:13.2px;line-height:16px;height:16px;color:#1f1f1f;letter-spacing:-0.18px;">23.02.2019</div>
<div class="t" style="left:485.9px;top:601.8px;font-size:13.2px;line-height:16px;height:16px;color:#1f1f1f;letter-spacing:-0.18px;">04.04.2019</div>
<div class="t" style="left:581.4px;top:601.8px;font-size:13.2px;line-height:16px;height:16px;color:#1f1f1f;letter-spacing:-0.18px;">300</div>
<div class="t" style="left:670.7px;top:601.8px;font-size:13.2px;line-height:16px;height:16px;color:#1f1f1f;letter-spacing:-0.18px;">41</div>
<div class="t" style="left:768.7px;top:601.8px;font-size:13.2px;line-height:16px;height:16px;color:#1f1f1f;letter-spacing:-0.18px;">23.02.2019</div>
<div class="t" style="left:842.1px;top:601.8px;font-size:13.2px;line-height:16px;height:16px;color:#1f1f1f;letter-spacing:-0.18px;">10.04.2019</div>
<div class="t" style="left:978.2px;top:601.8px;font-size:13.2px;line-height:16px;height:16px;color:#1f1f1f;letter-spacing:-0.18px;">310</div>
<div class="t" style="left:1106.7px;top:601.8px;font-size:13.2px;line-height:16px;height:16px;color:#1f1f1f;letter-spacing:-0.18px;">47</div>
<div class="t" style="left:116.2px;top:641.8px;font-size:13.2px;line-height:16px;height:16px;color:#1f1f1f;letter-spacing:0.19px;">Проект 6</div>
<div class="t" style="left:212.4px;top:641.8px;font-size:13.2px;line-height:16px;height:16px;color:#1f1f1f;letter-spacing:0.19px;">Категория 4</div>
<div class="t" style="left:308.0px;top:641.8px;font-size:13.2px;line-height:16px;height:16px;color:#1f1f1f;letter-spacing:0.19px;">Сотрудник 4</div>
<div class="t" style="left:397.0px;top:641.8px;font-size:13.2px;line-height:16px;height:16px;color:#1f1f1f;letter-spacing:-0.18px;">25.03.2019</div>
<div class="t" style="left:485.9px;top:641.8px;font-size:13.2px;line-height:16px;height:16px;color:#1f1f1f;letter-spacing:-0.18px;">04.04.2019</div>
<div class="t" style="left:581.4px;top:641.8px;font-size:13.2px;line-height:16px;height:16px;color:#1f1f1f;letter-spacing:-0.18px;">500</div>
<div class="t" style="left:670.7px;top:641.8px;font-size:13.2px;line-height:16px;height:16px;color:#1f1f1f;letter-spacing:-0.18px;">9</div>
<div class="t" style="left:768.7px;top:641.8px;font-size:13.2px;line-height:16px;height:16px;color:#1f1f1f;letter-spacing:-0.18px;">25.03.2019</div>
<div class="t" style="left:842.1px;top:641.8px;font-size:13.2px;line-height:16px;height:16px;color:#1f1f1f;letter-spacing:-0.18px;">09.04.2019</div>
<div class="t" style="left:978.2px;top:641.8px;font-size:13.2px;line-height:16px;height:16px;color:#1f1f1f;letter-spacing:-0.18px;">510</div>
<svg style="left:1058px;top:641px" width="16" height="16" viewBox="0 0 16 16"><path d="M1 0 V15" stroke="#6e6e6e" stroke-width="1.8"/><path d="M2.8 0 L14.2 4.8 L2.8 9.4 Z" fill="#d1340c"/></svg>
<div class="t" style="left:1106.7px;top:641.8px;font-size:13.2px;line-height:16px;height:16px;color:#1f1f1f;letter-spacing:-0.18px;">14</div>
<div class="t" style="left:116.2px;top:681.8px;font-size:13.2px;line-height:16px;height:16px;color:#1f1f1f;letter-spacing:0.19px;">Проект 7</div>
<div class="t" style="left:212.4px;top:681.8px;font-size:13.2px;line-height:16px;height:16px;color:#1f1f1f;letter-spacing:0.19px;">Категория 5</div>
<div class="t" style="left:308.0px;top:681.8px;font-size:13.2px;line-height:16px;height:16px;color:#1f1f1f;letter-spacing:0.19px;">Сотрудник 1</div>
<div class="t" style="left:397.0px;top:681.8px;font-size:13.2px;line-height:16px;height:16px;color:#1f1f1f;letter-spacing:-0.18px;">10.04.2019</div>
<div class="t" style="left:485.9px;top:681.8px;font-size:13.2px;line-height:16px;height:16px;color:#1f1f1f;letter-spacing:-0.18px;">04.05.2019</div>
<div class="t" style="left:581.4px;top:681.8px;font-size:13.2px;line-height:16px;height:16px;color:#1f1f1f;letter-spacing:-0.18px;">750</div>
<div class="t" style="left:670.7px;top:681.8px;font-size:13.2px;line-height:16px;height:16px;color:#1f1f1f;letter-spacing:-0.18px;">24</div>
<div class="t" style="left:768.7px;top:681.8px;font-size:13.2px;line-height:16px;height:16px;color:#1f1f1f;letter-spacing:-0.18px;">10.04.2019</div>
<div class="t" style="left:842.1px;top:681.8px;font-size:13.2px;line-height:16px;height:16px;color:#1f1f1f;letter-spacing:-0.18px;">09.05.2019</div>
<div class="t" style="left:978.2px;top:681.8px;font-size:13.2px;line-height:16px;height:16px;color:#1f1f1f;letter-spacing:-0.18px;">790</div>
<div class="t" style="left:1106.7px;top:681.8px;font-size:13.2px;line-height:16px;height:16px;color:#1f1f1f;letter-spacing:-0.18px;">29</div>
<div class="t" style="left:116.2px;top:721.8px;font-size:13.2px;line-height:16px;height:16px;color:#1f1f1f;letter-spacing:0.19px;">Проект 8</div>
<div class="t" style="left:212.4px;top:721.8px;font-size:13.2px;line-height:16px;height:16px;color:#1f1f1f;letter-spacing:0.19px;">Категория 2</div>
<div class="t" style="left:308.0px;top:721.8px;font-size:13.2px;line-height:16px;height:16px;color:#1f1f1f;letter-spacing:0.19px;">Сотрудник 1</div>
<div class="t" style="left:397.0px;top:721.8px;font-size:13.2px;line-height:16px;height:16px;color:#1f1f1f;letter-spacing:-0.18px;">15.04.2019</div>
<div class="t" style="left:485.9px;top:721.8px;font-size:13.2px;line-height:16px;height:16px;color:#1f1f1f;letter-spacing:-0.18px;">24.05.2019</div>
<div class="t" style="left:581.4px;top:721.8px;font-size:13.2px;line-height:16px;height:16px;color:#1f1f1f;letter-spacing:-0.18px;">450</div>
<div class="t" style="left:670.7px;top:721.8px;font-size:13.2px;line-height:16px;height:16px;color:#1f1f1f;letter-spacing:-0.18px;">39</div>
<div class="t" style="left:768.7px;top:721.8px;font-size:13.2px;line-height:16px;height:16px;color:#1f1f1f;letter-spacing:-0.18px;">09.04.2019</div>
<div class="t" style="left:842.1px;top:721.8px;font-size:13.2px;line-height:16px;height:16px;color:#1f1f1f;letter-spacing:-0.18px;">19.05.2019</div>
<div class="t" style="left:978.2px;top:721.8px;font-size:13.2px;line-height:16px;height:16px;color:#1f1f1f;letter-spacing:-0.18px;">430</div>
<div class="t" style="left:1106.7px;top:721.8px;font-size:13.2px;line-height:16px;height:16px;color:#1f1f1f;letter-spacing:-0.18px;">40</div>
<div style="left:81px;top:295px;width:207px;height:144px;background:#ffffe1;border:1px solid #4a4a4a;box-shadow:1px 1px 2px rgba(0,0,0,.22);"></div>
<div class="t" style="left:87.9px;top:298.4px;font-size:11.7px;line-height:15px;height:15px;color:#474747;letter-spacing:-0.10px;">Введите здесь названия проектов. В</div>
<div class="t" style="left:87.9px;top:313.3px;font-size:11.7px;line-height:15px;height:15px;color:#474747;letter-spacing:0.15px;">ячейке D2 укажите максимальный</div>
<div class="t" style="left:87.9px;top:328.2px;font-size:11.7px;line-height:15px;height:15px;color:#474747;letter-spacing:0.29px;">процент отклонения. Слишком</div>
<div class="t" style="left:87.9px;top:343.1px;font-size:11.7px;line-height:15px;height:15px;color:#474747;letter-spacing:0.19px;">высокие и низкие значения</div>
<div class="t" style="left:87.9px;top:358.0px;font-size:11.7px;line-height:15px;height:15px;color:#474747;letter-spacing:-0.04px;">фактических трудозатрат (в часах)</div>
<div class="t" style="left:87.9px;top:372.9px;font-size:11.7px;line-height:15px;height:15px;color:#474747;letter-spacing:-0.04px;">и длительности (в днях)</div>
<div class="t" style="left:87.9px;top:387.8px;font-size:11.7px;line-height:15px;height:15px;color:#474747;letter-spacing:0.29px;">выделяются полужирным</div>
<div class="t" style="left:87.9px;top:402.7px;font-size:11.7px;line-height:15px;height:15px;color:#474747;letter-spacing:0.25px;">красным шрифтом и флагами в</div>
<div class="t" style="left:87.9px;top:417.6px;font-size:11.7px;line-height:15px;height:15px;color:#474747;letter-spacing:0.03px;">столбцах K и M.</div>
<svg style="left:56px;top:274px" width="412" height="28" viewBox="0 0 412 28"><defs><filter id="sh" x="-5%" y="-50%" width="110%" height="200%"><feDropShadow dx="1.5" dy="3" stdDeviation="1.3" flood-color="#000" flood-opacity=".5"/></filter></defs><g filter="url(#sh)"><path d="M404.5 13.3 H14" stroke="#fff" stroke-width="6" stroke-linecap="round"/><path d="M23.5 6.3 L10.3 13.3 L23.5 20.3" fill="none" stroke="#fff" stroke-width="5.6" stroke-linejoin="miter" stroke-miterlimit="6"/></g><path d="M404.5 13.3 H15" stroke="#d4370c" stroke-width="4.2" stroke-linecap="round"/><path d="M23.5 6.3 L10.3 13.3 L23.5 20.3" fill="none" stroke="#d4370c" stroke-width="3.5" stroke-linejoin="miter" stroke-miterlimit="6"/></svg>
<div style="left:1187px;top:240px;width:15px;height:506px;background:#5b5b5b;"></div>
<div style="left:1187px;top:240px;width:15px;height:15px;background:#a6a6a6;border:1px solid #5c5c5c;"></div>
<div style="left:1190.5px;top:245px;border-left:4px solid transparent;border-right:4px solid transparent;border-bottom:4.5px solid #2e2e2e;"></div>
<div style="left:1188px;top:305px;width:14px;height:350px;background:#a0a0a0;"></div>
<div style="left:1187px;top:731px;width:15px;height:14.5px;background:#a6a6a6;border:1px solid #5c5c5c;"></div>
<div style="left:1190.5px;top:736.5px;border-left:4px solid transparent;border-right:4px solid transparent;border-top:4.5px solid #2e2e2e;"></div>
<div style="left:31px;top:746px;width:1174px;height:28px;background:#6a6a6a;"></div>
<div style="left:58.5px;top:755.5px;border-top:4px solid transparent;border-bottom:4px solid transparent;border-right:4.5px solid #979797;"></div>
<div style="left:87px;top:755.5px;border-top:4px solid transparent;border-bottom:4px solid transparent;border-left:4.5px solid #979797;"></div>
<div style="left:131px;top:746px;width:60px;height:24px;background:#fff;border-bottom:2px solid #1b5a66;"></div>
<div class="t" style="left:142.9px;top:750.8px;font-size:13px;line-height:16px;height:16px;color:#1b5e54;letter-spacing:-0.41px;font-weight:bold;">Лист1</div>
<svg style="left:223px;top:751px" width="17" height="17" viewBox="0 0 17 17"><circle cx="8.5" cy="8.5" r="7.2" fill="none" stroke="#fff" stroke-width="1.7"/><path d="M8.5 4.3 V12.7 M4.3 8.5 H12.7" stroke="#fff" stroke-width="2"/></svg>
<div style="left:735px;top:755px;width:2px;height:2px;background:#fff;"></div>
<div style="left:735px;top:760px;width:2px;height:2px;background:#fff;"></div>
<div style="left:735px;top:765px;width:2px;height:2px;background:#fff;"></div>
<div style="left:752px;top:754px;width:431px;height:14px;background:#5a5a5a;"></div>
<div style="left:752px;top:754px;width:14px;height:14px;background:#a6a6a6;border:1px solid #5c5c5c;"></div>
<div style="left:756px;top:757.5px;border-top:3.5px solid transparent;border-bottom:3.5px solid transparent;border-right:4.5px solid #2e2e2e;"></div>
<div style="left:766px;top:754px;width:345px;height:14px;background:#a0a0a0;"></div>
<div style="left:1168px;top:754px;width:15px;height:14px;background:#a6a6a6;border:1px solid #5c5c5c;"></div>
<div style="left:1173.5px;top:757.5px;border-top:3.5px solid transparent;border-bottom:3.5px solid transparent;border-left:4.5px solid #2e2e2e;"></div>
<div style="left:31px;top:774.4px;width:1174px;height:21.6px;background:#c6c3c0;"></div>
<div style="left:905px;top:774.4px;width:38px;height:21.6px;background:#a29f9d;"></div>
<svg style="left:917px;top:778px" width="13" height="13" viewBox="0 0 13 13"><rect x="0.5" y="0.5" width="12" height="12" fill="none" stroke="#fff"/><path d="M4.5 0.5 V12.5 M8.5 0.5 V12.5 M0.5 4.5 H12.5 M0.5 8.5 H12.5" stroke="#fff"/></svg>
<svg style="left:955px;top:778px" width="14" height="14" viewBox="0 0 14 14"><rect x="0.5" y="0.5" width="13" height="12" fill="none" stroke="#fff"/><rect x="3.5" y="3.5" width="7" height="6" fill="none" stroke="#fff"/><path d="M5 5.5 H9 M5 7.5 H9" stroke="#fff"/></svg>
<svg style="left:993px;top:778px" width="14" height="14" viewBox="0 0 14 14"><rect x="0.5" y="0.5" width="13" height="12" fill="none" stroke="#fff"/><path d="M4.5 0.5 V8 H10 V0.5 Z" fill="#fff" stroke="#fff"/><path d="M1 8.5 H4.5" stroke="#fff"/></svg>
<div style="left:1024px;top:784px;width:6px;height:2px;background:#fff;"></div>
<div style="left:1034px;top:785px;width:100px;height:1px;background:#9f9c9a;"></div>
<div style="left:1082px;top:779px;width:5px;height:11px;background:#787878;"></div>
<div style="left:1137px;top:784px;width:8px;height:2px;background:#fff;"></div>
<div style="left:1140px;top:781px;width:2px;height:8px;background:#fff;"></div>
<div class="t" style="left:1156.0px;top:776.2px;font-size:11.8px;line-height:16px;height:16px;color:#333;letter-spacing:-0.69px;">100 %</div>
</body></html>
